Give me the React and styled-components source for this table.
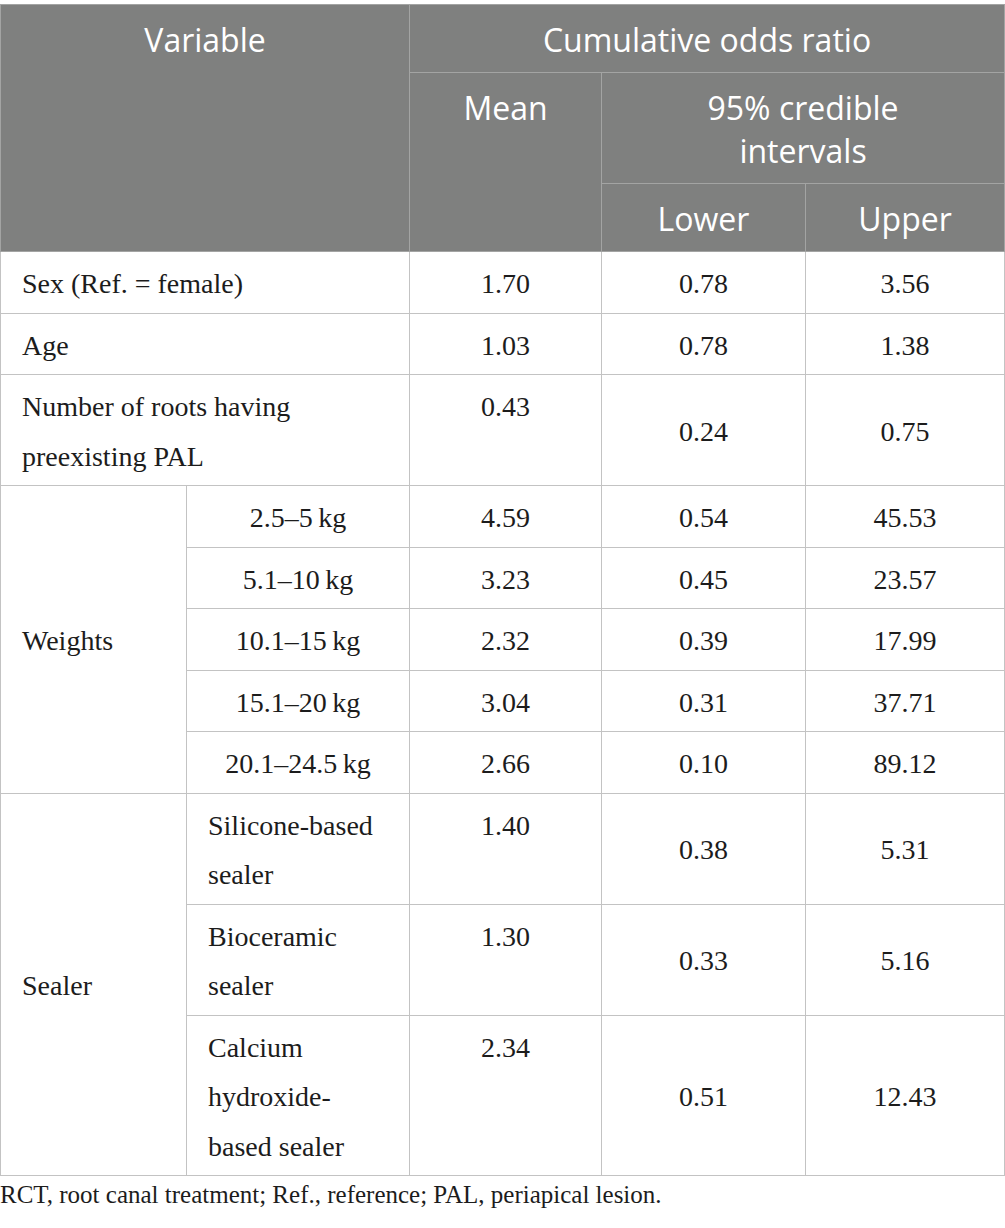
import React from 'react';
import styled, { createGlobalStyle } from 'styled-components';

const GlobalStyle = createGlobalStyle`
    html, body {
        margin: 0;
        padding: 0;
        background: #ffffff;
    }
`;

const Wrapper = styled.div`
    width: 1004px;
    padding-top: 4px;
`;

const Table = styled.table`
    width: 1004px;
    border-collapse: collapse;
    table-layout: fixed;
    font-family: 'Liberation Serif', 'Times New Roman', serif;
    font-size: 28px;
    color: #1c1c1c;
`;

const HeadCell = styled.th`
    background: #7f807f;
    color: #ffffff;
    font-family: 'Open Sans', 'Noto Sans', sans-serif;
    font-weight: 400;
    font-size: 32px;
    line-height: 43px;
    padding: 13px 10px 11px;
    text-align: center;
    vertical-align: ${(p) => (p.$top ? 'top' : 'middle')};
    border: 1px solid #a3a4a3;
`;

const Cell = styled.td`
    line-height: 49.5px;
    padding: 7px 24px 4px 21px;
    border: 1px solid #c3c3c3;
    text-align: ${(p) => (p.$center ? 'center' : 'left')};
    vertical-align: ${(p) => (p.$top ? 'top' : 'middle')};
`;

const NumCell = styled(Cell)`
    padding-left: 10px;
    padding-right: 10px;
`;

const Footnote = styled.p`
    margin: 2px 0 0;
    font-family: 'Liberation Serif', 'Times New Roman', serif;
    font-size: 25px;
    line-height: 34px;
    color: #1c1c1c;
`;

const simpleRows = [
    { label: 'Sex (Ref. = female)', mean: '1.70', lower: '0.78', upper: '3.56' },
    { label: 'Age', mean: '1.03', lower: '0.78', upper: '1.38' },
    { label: 'Number of roots having preexisting PAL', mean: '0.43', lower: '0.24', upper: '0.75' },
];

const weights = [
    { label: '2.5–5\u2009kg', mean: '4.59', lower: '0.54', upper: '45.53' },
    { label: '5.1–10\u2009kg', mean: '3.23', lower: '0.45', upper: '23.57' },
    { label: '10.1–15\u2009kg', mean: '2.32', lower: '0.39', upper: '17.99' },
    { label: '15.1–20\u2009kg', mean: '3.04', lower: '0.31', upper: '37.71' },
    { label: '20.1–24.5\u2009kg', mean: '2.66', lower: '0.10', upper: '89.12' },
];

const sealers = [
    { label: 'Silicone-based sealer', mean: '1.40', lower: '0.38', upper: '5.31' },
    { label: 'Bioceramic sealer', mean: '1.30', lower: '0.33', upper: '5.16' },
    { label: 'Calcium hydroxide-based sealer', mean: '2.34', lower: '0.51', upper: '12.43' },
];

const Values = ({ row }) => (
    <>
        <NumCell $center $top>{row.mean}</NumCell>
        <NumCell $center>{row.lower}</NumCell>
        <NumCell $center>{row.upper}</NumCell>
    </>
);

const App = () => {
    return (
        <Wrapper>
            <GlobalStyle />
            <Table>
                <colgroup>
                    <col style={{ width: '186px' }} />
                    <col style={{ width: '223px' }} />
                    <col style={{ width: '192px' }} />
                    <col style={{ width: '204px' }} />
                    <col style={{ width: '199px' }} />
                </colgroup>
                <thead>
                    <tr>
                        <HeadCell colSpan={2} rowSpan={3} $top>
                            Variable
                        </HeadCell>
                        <HeadCell colSpan={3}>Cumulative odds ratio</HeadCell>
                    </tr>
                    <tr>
                        <HeadCell rowSpan={2} $top>
                            Mean
                        </HeadCell>
                        <HeadCell colSpan={2}>
                            95% credible
                            <br />
                            intervals
                        </HeadCell>
                    </tr>
                    <tr>
                        <HeadCell>Lower</HeadCell>
                        <HeadCell>Upper</HeadCell>
                    </tr>
                </thead>
                <tbody>
                    {simpleRows.map((row) => (
                        <tr key={row.label}>
                            <Cell colSpan={2} $top>
                                {row.label}
                            </Cell>
                            <Values row={row} />
                        </tr>
                    ))}
                    {weights.map((row, i) => (
                        <tr key={row.label}>
                            {i === 0 && <Cell rowSpan={weights.length}>Weights</Cell>}
                            <NumCell $center>{row.label}</NumCell>
                            <Values row={row} />
                        </tr>
                    ))}
                    {sealers.map((row, i) => (
                        <tr key={row.label}>
                            {i === 0 && <Cell rowSpan={sealers.length}>Sealer</Cell>}
                            <Cell $top>{row.label}</Cell>
                            <Values row={row} />
                        </tr>
                    ))}
                </tbody>
            </Table>
            <Footnote>
                RCT, root canal treatment; Ref., reference; PAL, periapical lesion.
            </Footnote>
        </Wrapper>
    );
};

export default App;
